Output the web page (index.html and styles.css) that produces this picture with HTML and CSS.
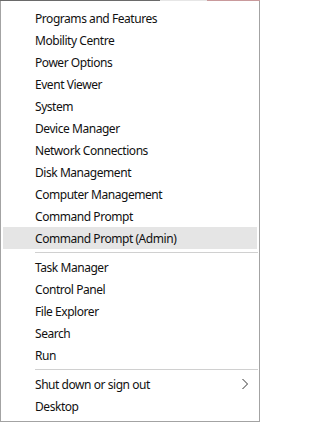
FILE: index.html
```html
<!DOCTYPE html>
<html>
<head>
<meta charset="utf-8">
<link rel="stylesheet" href="styles.css">
</head>
<body>
<div class="menu">
  <div class="topline"><span class="seg dark"></span><span class="seg light"></span><span class="seg pink"></span></div>
  <div class="list">
    <div class="item">Programs and Features</div>
    <div class="item">Mobility Centre</div>
    <div class="item">Power Options</div>
    <div class="item">Event Viewer</div>
    <div class="item">System</div>
    <div class="item">Device Manager</div>
    <div class="item">Network Connections</div>
    <div class="item">Disk Management</div>
    <div class="item">Computer Management</div>
    <div class="item">Command Prompt</div>
    <div class="item active">Command Prompt (Admin)</div>
    <div class="sep"></div>
    <div class="item">Task Manager</div>
    <div class="item">Control Panel</div>
    <div class="item">File Explorer</div>
    <div class="item">Search</div>
    <div class="item">Run</div>
    <div class="sep"></div>
    <div class="item sub"><span>Shut down or sign out</span>
      <svg class="chev" width="8" height="12" viewBox="0 0 8 12"><path d="M1.5 1 L6.5 6 L1.5 11" fill="none" stroke="#333" stroke-width="1"/></svg>
    </div>
    <div class="item">Desktop</div>
  </div>
</div>
</body>
</html>
```
FILE: styles.css
```css
html, body {
  margin: 0;
  padding: 0;
  background: #fff;
}
.menu {
  width: 260px;
  height: 422px;
  box-sizing: border-box;
  border: 1px solid #a3a3a3;
  border-top: none;
  background: #fff;
  display: flex;
  flex-direction: column;
  font-family: "Noto Sans", "Open Sans", sans-serif;
  font-size: 12px;
  letter-spacing: -0.45px;
  color: #111;
}
.topline {
  display: flex;
  height: 1px;
  margin: 0 -1px;
}
.seg { display: block; height: 1px; }
.seg.dark { width: 160px; background: #6a6a6a; }
.seg.light { width: 47px; background: #e6e6e6; }
.seg.pink { flex: 1; background: #c99a9c; }
.list {
  padding-top: 6px;
  display: flex;
  flex-direction: column;
}
.item {
  height: 22px;
  display: flex;
  align-items: center;
  padding-left: 34px;
  white-space: nowrap;
}
.item.active {
  background: #e5e5e5;
  margin: 0 2px;
  padding-left: 32px;
}
.item.sub {
  justify-content: space-between;
  padding-right: 10px;
}
.chev { display: block; }
.sep {
  height: 1px;
  background: #d0d0d0;
  margin: 3px 1px 3px 34px;
}
```
